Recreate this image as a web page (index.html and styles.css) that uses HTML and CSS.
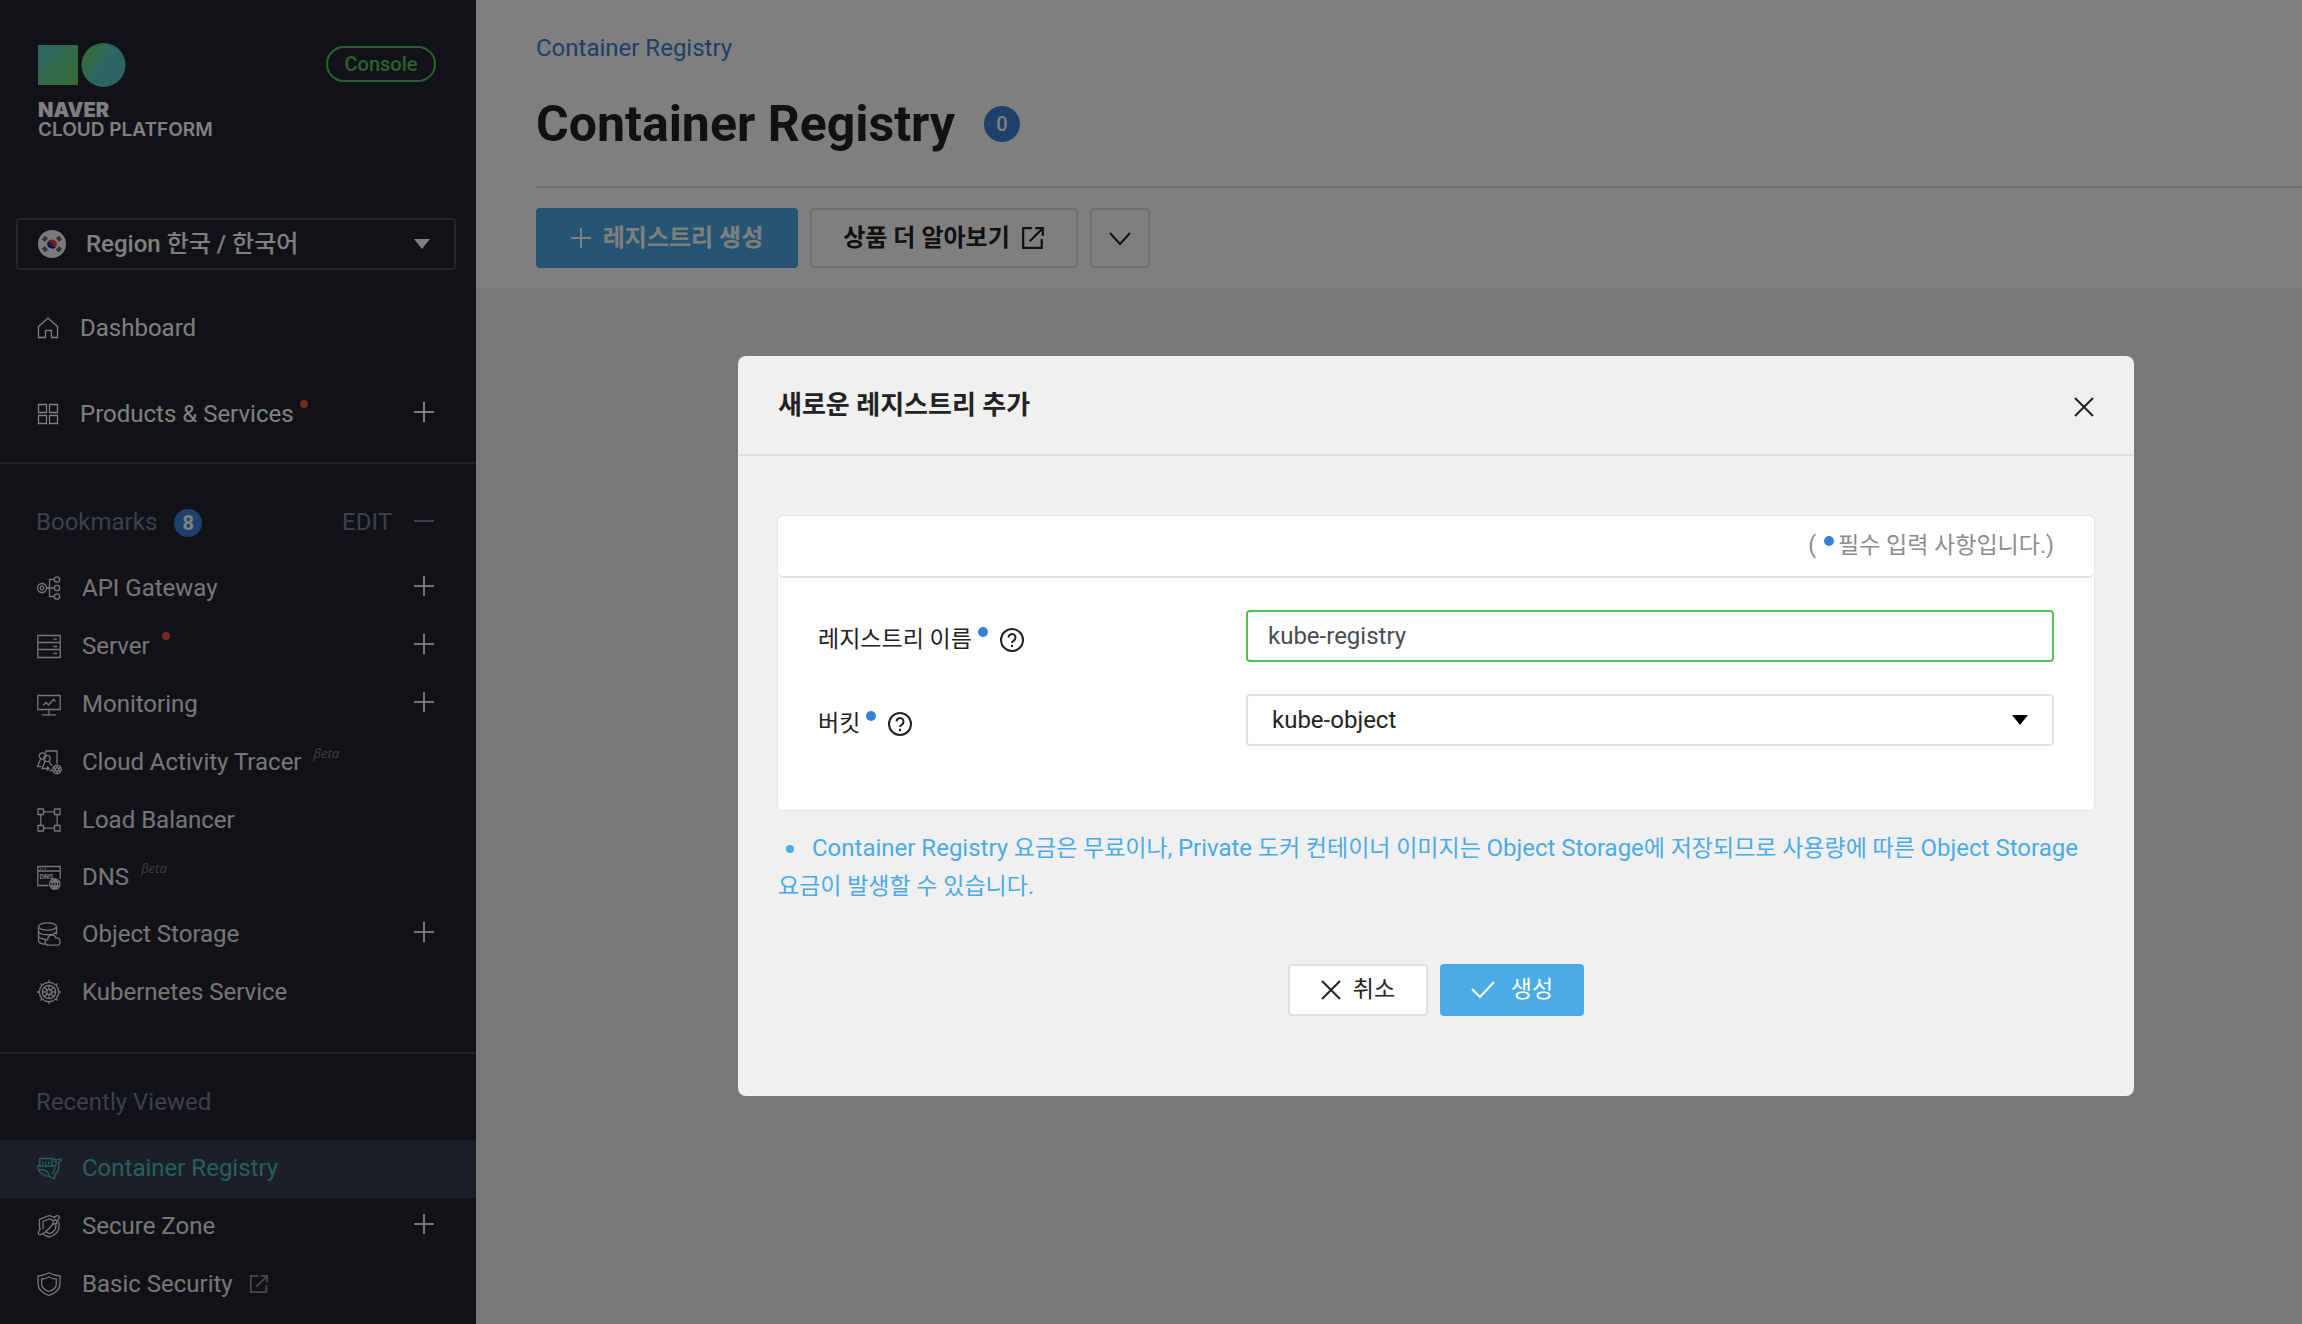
FILE: index.html
```html
<!DOCTYPE html>
<html lang="ko">
<head>
<meta charset="utf-8">
<meta name="viewport" content="width=device-width, initial-scale=1">
<title>Container Registry</title>
<link rel="stylesheet" href="styles.css">
</head>
<body>
<svg class="sprite" aria-hidden="true">
  <symbol id="plus" viewBox="0 0 20 20"><path d="M10 0v20M0 10h20"/></symbol>
  <symbol id="minus" viewBox="0 0 20 20"><path d="M0 10h20"/></symbol>
  <symbol id="cross" viewBox="0 0 20 20"><path d="M1 1l18 18M19 1L1 19"/></symbol>
  <symbol id="caret" viewBox="0 0 16 10"><path d="M0 0h16l-8 10z"/></symbol>
  <symbol id="external" viewBox="0 0 22 22"><path d="M10 2H2v18h17v-8M8 14L20 2M13 2h7v7"/></symbol>
  <symbol id="help" viewBox="0 0 24 24"><circle cx="12" cy="12" r="11"/><path d="M8.500 9.500a3.500 3.500 0 1 1 5.500 2.900c-1.300.8-2 1.300-2 2.600"/><path d="M12 16.800v2.200"/></symbol>
</svg>

<div class="layout">
  <aside class="sidebar">
    <header class="brand">
      <a class="logo" href="#">
        <svg width="88" height="44" viewBox="0 0 88 44" aria-hidden="true">
          <defs>
            <linearGradient id="g1" x1="0" y1="0" x2="1" y2="1"><stop offset="0" stop-color="#5ad0d0"/><stop offset="1" stop-color="#6ed862"/></linearGradient>
            <linearGradient id="g2" x1="0" y1="0.100" x2="1" y2="0.700"><stop offset="0" stop-color="#70dc56"/><stop offset="0.550" stop-color="#5acbcb"/></linearGradient>
          </defs>
          <path fill="url(#g1)" d="M0 2h40v40H0z"/>
          <circle fill="url(#g2)" cx="65.500" cy="22" r="22"/>
        </svg>
        <strong class="logo-naver">NAVER</strong>
        <span class="logo-cloud">CLOUD PLATFORM</span>
      </a>
      <a class="console" href="#">Console</a>
    </header>

    <div class="region">
      <svg class="flag" width="28" height="28" viewBox="0 0 28 28" aria-hidden="true">
        <circle cx="14" cy="14" r="14" fill="#f4f4f4"/>
        <path fill="#e03a30" d="M9.500 12a5 5 0 0 1 9 4.200c-1.500 1-3.600.2-4.500-1.700-1-2-3.200-3-4.500-2.500z"/>
        <path fill="#1e1e96" d="M18.500 16.200A5 5 0 0 1 9.500 12c1.300-.6 3.500.5 4.500 2.500.9 1.900 3 2.700 4.500 1.700z"/>
        <g stroke="#333" stroke-width="4" stroke-dasharray="1.300 .5"><path d="M5.500 10.500l3-3.500M19.500 7l3 3.500M5.500 17.500l3 3.500M19.500 21l3-3.500"/></g>
      </svg>
      <select class="region-select" aria-label="Region"><option>Region 한국 / 한국어</option></select>
      <svg class="caret" width="16" height="10"><use href="#caret"/></svg>
    </div>

    <nav class="main-nav">
      <div class="main-row">
        <svg class="icon" viewBox="0 0 24 24"><path d="M2.500 21.500V10.500L12 2l9.500 8.500v11h-6v-7h-6v7z"/></svg>
        <a href="#">Dashboard</a>
      </div>
      <div class="main-row">
        <svg class="icon" viewBox="0 0 24 24"><path d="M2.500 2.500h8v8h-8zM13.500 2.500h8v8h-8zM2.500 13.500h8v8h-8zM13.500 13.500h8v8h-8z"/></svg>
        <a href="#">Products &amp; Services</a><i class="new-dot"></i>
        <button class="toggle" aria-label="Expand Products &amp; Services"><svg><use href="#plus"/></svg></button>
      </div>
    </nav>

    <section class="group bookmarks">
      <div class="group-head">
        <h2>Bookmarks</h2><span class="count">8</span>
        <button class="edit">EDIT</button>
        <button class="toggle" aria-label="Collapse bookmarks"><svg><use href="#minus"/></svg></button>
      </div>
      <ul>
        <li>
          <svg class="icon" viewBox="0 0 24 24"><circle cx="5" cy="12" r="4.500"/><circle cx="5" cy="12" r="1.800"/><circle cx="20" cy="3.500" r="2.700"/><circle cx="20" cy="12" r="2.700"/><circle cx="20" cy="20.500" r="2.700"/><path d="M9.500 12h7.800M17.300 3.500h-4.800v17h4.800"/></svg>
          <a href="#">API Gateway</a>
          <button class="toggle" aria-label="Expand API Gateway"><svg><use href="#plus"/></svg></button>
        </li>
        <li>
          <svg class="icon" viewBox="0 0 24 24"><path d="M.8 1.500h22.400v22H.8zM.8 8.500h22.400M.8 15.500h22.400M16.500 5.200h3.500M16.500 12.500h3.500M16.500 19.500h3.500"/></svg>
          <a href="#">Server</a><i class="new-dot far"></i>
          <button class="toggle" aria-label="Expand Server"><svg><use href="#plus"/></svg></button>
        </li>
        <li>
          <svg class="icon" viewBox="0 0 24 24"><path d="M.8 3.500h22.400v14H.8zM12 17.500v5M5 22.800h14M6 13.500l3-3 2.500 2.500 5-5.500 2 2"/></svg>
          <a href="#">Monitoring</a>
          <button class="toggle" aria-label="Expand Monitoring"><svg><use href="#plus"/></svg></button>
        </li>
        <li>
          <svg class="icon" viewBox="0 0 24 24"><path d="M9 3V1h11v13M12.500 20.500h3"/><circle cx="5.500" cy="6" r="3.200"/><circle cx="10" cy="8.500" r="3.200"/><path d="M3.500 9L.5 16.500h3.500M8 11.500L5 18.500h4M12 11.500l3 4.500M8.500 18.500h3M10 16.500l2 2-2 2"/><circle cx="20" cy="19.500" r="4.200"/><circle cx="20" cy="19.500" r="1.700"/><path d="M20 15.300v2.500M20 21v2.500M16.400 17.400l2.100 1.200M21.500 20.400l2.100 1.200M16.400 21.600l2.100-1.200M21.500 18.600l2.100-1.200"/></svg>
          <a href="#">Cloud Activity Tracer</a><sup class="beta">βeta</sup>
        </li>
        <li>
          <svg class="icon" viewBox="0 0 24 24"><path d="M1 1h5.500v5.500H1zM17.500 1H23v5.500h-5.500zM1 17.500h5.500V23H1zM17.500 17.500H23V23h-5.500zM6.500 3.800h11M6.500 20.200h11M3.800 6.500v11M20.200 6.500v11"/></svg>
          <a href="#">Load Balancer</a>
        </li>
        <li class="short">
          <svg class="icon" viewBox="0 0 24 24"><path d="M11.500 20.500H.8v-19h22.400v12.500M.8 6h22.400M3 3.800h1M5.500 3.800h1M8 3.800h1"/><text class="icon-text" x="2.500" y="13.500">DNS</text><circle cx="17.800" cy="19" r="5.200"/><path d="M13.500 17h8.600M13.500 21h8.600M17.800 14v10M17.300 14c-3 3-3 7 0 10M18.300 14c3 3 3 7 0 10"/></svg>
          <a href="#">DNS</a><sup class="beta">βeta</sup>
        </li>
        <li>
          <svg class="icon" viewBox="0 0 24 24"><ellipse cx="10.500" cy="4.500" rx="9" ry="3.700"/><path d="M1.500 4.500v14c0 2 3 3.500 6.500 3.700M19.500 4.500v8M1.500 9c0 5 18 5 18 0M1.500 14c0 2 4 3.500 8 3.300"/><path d="M11.500 23.200c-4.500 0-4.500-5.500-.7-5.700 0-5 6.700-6 8.200-1.500 5-.5 5.500 7.200 1 7.200z"/></svg>
          <a href="#">Object Storage</a>
          <button class="toggle" aria-label="Expand Object Storage"><svg><use href="#plus"/></svg></button>
        </li>
        <li>
          <svg class="icon" viewBox="0 0 24 24"><circle cx="12" cy="12" r="9.700"/><circle cx="12" cy="12" r="6.700"/><circle cx="12" cy="12" r="2.500"/><path d="M12 0v2.300M12 21.700V24M0 12h2.300M21.700 12H24M3.500 3.500L5 5M19 19l1.500 1.500M20.500 3.500L19 5M5 19l-1.500 1.500M12 5.300v4.200M12 14.500v4.200M5.300 12h4.200M14.500 12h4.200M7.300 7.300l3 3M13.700 13.700l3 3M16.700 7.300l-3 3M10.300 13.700l-3 3"/></svg>
          <a href="#">Kubernetes Service</a>
        </li>
      </ul>
    </section>

    <section class="group recent">
      <div class="group-head"><h2>Recently Viewed</h2></div>
      <ul>
        <li class="active">
          <svg class="icon" viewBox="0 0 24 24"><path d="M2.800 10V2.500h12V10M5.800 5.500v3M8.800 5.500v3M11.800 5.500v3"/><path d="M.8 10h17c1.500-1 1.700-2.500 1.200-4-1.600-.4-2.500-1.300-2.700-3.200 1.800 0 3 .3 3.700 1.400.8-1 2.200-1.400 4.300-1.200-.3 2.200-1.400 3.100-2.800 3.300 1 5.200-.5 10-3.500 12.500l-.5 3.700c-2.200-.3-3.700-1-4.700-2.200C7 20.500 1.200 17 .8 10zM2 13.500c4 .3 7 .5 8.500 2.500l2 4M17.800 11c0 3-1 5.500-3 7"/></svg>
          <a href="#">Container Registry</a>
        </li>
        <li>
          <svg class="icon" viewBox="0 0 24 24"><path d="M18.500 4L12.500 1.500 2.500 5.500v7c0 1.200.3 2.500.8 3.500M6 20c2 1.500 4 2.500 6.500 3 5.500-1.800 9.500-5 9.500-10.500V8"/><path d="M16.500 6.500l-4-1.500L6 7.500v5c0 1 .2 1.800.5 2.500M8.500 17.500c1.200 1 2.500 1.700 4 2.200 3.800-1.400 6.300-3.600 6.300-7.200v-2"/><circle cx="18" cy="8" r="2"/><path d="M16.500 3.500c3-2 5-2.300 5.600-1.200.5 1.200-.2 3-1.800 5.200M16.500 9.500C11 16.500 4.500 21.500 2 20.500.8 19.800 1.300 17.500 3.300 14.500"/></svg>
          <a href="#">Secure Zone</a>
          <button class="toggle" aria-label="Expand Secure Zone"><svg><use href="#plus"/></svg></button>
        </li>
        <li>
          <svg class="icon" viewBox="0 0 24 24"><path d="M12 .8c3.500 2 7 3 11 3v8c0 6-4.500 9.500-11 11.500C5.500 21.300 1 17.800 1 11.800v-8c4 0 7.500-1 11-3z"/><path d="M12 5c2.300 1.300 4.700 2 7.300 2v5c0 4-2.800 6-7.300 7.500C7.500 18 4.700 16 4.700 12V7C7.300 7 9.700 6.300 12 5z"/></svg>
          <a href="#">Basic Security</a>
          <svg class="ext" width="20" height="20"><use href="#external"/></svg>
        </li>
      </ul>
    </section>
  </aside>

  <main class="content">
    <header class="page-head">
      <a class="crumb" href="#">Container Registry</a>
      <div class="title-row"><h1>Container Registry</h1><span class="count big">0</span></div>
      <div class="actions">
        <button class="btn primary"><svg width="20" height="20"><use href="#plus"/></svg>레지스트리 생성</button>
        <button class="btn outline">상품 더 알아보기<svg width="24" height="24"><use href="#external"/></svg></button>
        <button class="btn more" aria-label="More"><svg width="22" height="13" viewBox="0 0 22 13"><path d="M1 1l10 11L21 1"/></svg></button>
      </div>
    </header>
  </main>
</div>

<div class="overlay">
  <form class="modal" role="dialog" aria-labelledby="modal-title">
    <header class="modal-head">
      <h2 id="modal-title">새로운 레지스트리 추가</h2>
      <button type="button" class="close" aria-label="닫기"><svg width="20" height="20"><use href="#cross"/></svg></button>
    </header>
    <div class="modal-body">
      <div class="panel">
        <p class="required-note">( <i class="req"></i>필수 입력 사항입니다.)</p>
        <div class="fields">
          <div class="field">
            <label for="name">레지스트리 이름</label><i class="req"></i><svg class="help"><use href="#help"/></svg>
          </div>
          <input class="control" id="name" type="text" value="kube-registry">
          <div class="field">
            <label for="bucket">버킷</label><i class="req"></i><svg class="help"><use href="#help"/></svg>
          </div>
          <div class="control picker">
            <select id="bucket"><option>kube-object</option></select>
            <svg class="caret" width="16" height="10"><use href="#caret"/></svg>
          </div>
        </div>
      </div>
      <p class="notice"><i class="bullet"></i><span lang="en">Container Registry</span> 요금은 무료이나, <span lang="en">Private</span> 도커 컨테이너 이미지는 <span lang="en">Object Storage</span>에 저장되므로 사용량에 따른 <span lang="en">Object Storage</span> 요금이 발생할 수 있습니다.</p>
      <div class="modal-actions">
        <button type="button" class="small-btn cancel"><svg width="20" height="20"><use href="#cross"/></svg>취소</button>
        <button type="submit" class="small-btn create"><svg width="24" height="18" viewBox="0 0 24 18"><path d="M1 8l8 8L23 1"/></svg>생성</button>
      </div>
    </div>
  </form>
</div>
</body>
</html>
```
FILE: styles.css
```css
* { box-sizing: border-box; }

body {
  margin: 0;
  background: #f1f1f1;
  color: #222;
  font: 24px/36px Roboto, "Noto Sans CJK KR", sans-serif;
}

h1, h2, p, ul { margin: 0; padding: 0; font-weight: 400; font-size: inherit; }
li { list-style: none; }
a { color: inherit; text-decoration: none; }
button, select, input { font: inherit; color: inherit; border: 0; padding: 0; margin: 0; background: none; }
button { cursor: pointer; }
svg { flex: none; display: block; fill: none; stroke: currentColor; stroke-width: 2; overflow: visible; }
.sprite { position: absolute; width: 0; height: 0; }
.caret { fill: currentColor; stroke: none; }
.flag, .logo svg { stroke: none; }

.layout { display: flex; min-height: 100vh; }

/* Sidebar */
.sidebar { flex: none; width: 476px; background: #222430; color: #fff; }

.brand { display: flex; justify-content: space-between; align-items: flex-start; padding: 43px 40px 0 38px; height: 218px; }
.logo { display: flex; flex-direction: column; }
.logo-naver, .logo-cloud { font: 900 20px/20px Inter, sans-serif; }
.logo-naver { margin-top: 13px; }
.logo-cloud { font-weight: 600; font-size: 19px; }
.console { margin-top: 3px; width: 110px; height: 36px; border: 2px solid #55c35c; border-radius: 18px; color: #55c35c; font-weight: 500; font-size: 20px; line-height: 32px; text-align: center; }

.region { display: flex; align-items: center; margin: 0 20px 0 16px; height: 52px; padding: 0 24px 0 20px; border: 2px solid #484c56; border-radius: 4px; }
.region-select { appearance: none; flex: 1; height: 48px; padding-left: 20px; font-weight: 500; }

.icon { width: 24px; height: 24px; stroke-width: 1.3; }
.icon-text { font: 700 7px/7px Roboto, sans-serif; fill: currentColor; stroke: none; }
.main-nav { padding-top: 15px; height: 194px; border-bottom: 2px solid #43464e; }
.main-row { display: flex; align-items: center; height: 86px; padding: 0 42px 0 36px; }
.main-row .icon { margin-right: 20px; }

.toggle { margin-left: auto; width: 20px; height: 36px; padding-bottom: 4px; }
.toggle svg { width: 20px; height: 20px; }
.new-dot { width: 8px; height: 8px; border-radius: 4px; margin: 0 0 20px 6px; background: #ea5643; }
.new-dot.far { margin-left: 12px; }

.group { border-bottom: 2px solid #43464e; }
.group-head { display: flex; align-items: center; color: #748399; padding: 0 42px 0 36px; }
.bookmarks .group-head { padding-top: 40px; margin-bottom: 19px; }
.bookmarks { padding-bottom: 31px; }
.recent { padding-top: 30px; border-bottom: 0; }
.recent .group-head { margin-bottom: 20px; }
.edit { margin-left: auto; margin-right: 22px; }
.edit + .toggle { margin-left: 0; padding-bottom: 2px; }
.count { display: flex; align-items: center; justify-content: center; width: 28px; height: 28px; border-radius: 50%; margin: 2px 0 0 17px; background: #3a83d6; color: #fff; font-weight: 700; font-size: 20px; }
.group li { display: flex; align-items: center; height: 58px; padding: 0 42px 0 37px; color: #ededed; }
.group li.short { height: 56px; }
.group li .icon { margin-right: 21px; }
.recent li { padding-bottom: 2px; }
.group li.active { background: #343e50; color: #51bfbb; }
.beta { margin: 0 0 18px 12px; color: #767a85; font: italic 13px/16px "Noto Sans", sans-serif; }
.ext { margin-left: 16px; color: #8a929e; }

/* Page */
.content { flex: 1; min-width: 0; }
.page-head { height: 288px; padding: 30px 0 0 60px; background: #fff; }
.crumb { display: block; color: #3a7fd0; }
.title-row { display: flex; align-items: center; height: 122px; padding-bottom: 4px; border-bottom: 2px solid #dcdcdc; }
h1 { font-weight: 700; font-size: 50px; line-height: 60px; color: #222; }
.count.big { width: 36px; height: 36px; margin: 0 0 0 29px; font-weight: 500; }
.actions { display: flex; gap: 12px; padding-top: 20px; }
.btn { display: flex; align-items: center; justify-content: center; height: 60px; border-radius: 4px; font-weight: 700; }
.primary { width: 262px; gap: 12px; background: #4aabe6; color: #fff; }
.outline { width: 268px; gap: 11px; border: 2px solid #e1e1e1; }
.more { width: 60px; border: 2px solid #e1e1e1; }

/* Dialog */
.overlay { position: fixed; inset: 0; display: flex; align-items: flex-start; padding: 356px 168px 0 738px; background: rgba(0, 0, 0, 0.5); }
.modal { flex: 1; padding-bottom: 80px; border-radius: 8px; background: #f0f0f0; }
.modal-head { display: flex; justify-content: space-between; align-items: center; height: 100px; padding: 0 40px; border-bottom: 2px solid #e1e1e1; }
.modal-head h2 { font-weight: 700; font-size: 26px; }
.close { width: 20px; height: 20px; margin-top: 4px; }
.modal-body { padding: 59px 40px 0; }

.panel { margin: 0 -1px; border: 1px solid #e4e4e4; border-radius: 6px; background: #fff; }
.required-note { display: flex; justify-content: flex-end; align-items: center; height: 62px; padding-right: 40px; border-bottom: 2px solid #e1e1e1; border-radius: 6px; color: #8c8c8c; font-size: 23px; }
.req { width: 10px; height: 10px; margin: 0 4px 10px 8px; border-radius: 50%; background: #3680d6; }
.fields { display: grid; grid-template-columns: 428px 1fr; gap: 32px 0; padding: 32px 40px 64px; }
.field { display: flex; align-items: center; padding-top: 7px; font-size: 23px; }
.field .req { margin: 0 12px 16px 6px; }
.help { width: 24px; height: 24px; }
.control { width: 100%; height: 52px; border: 2px solid #e1e1e1; border-radius: 4px; background: #fff; }
input.control { padding: 0 20px; border-color: #55c04f; color: #464c52; outline: 0; }
.picker { display: flex; align-items: center; padding-right: 24px; }
.picker select { appearance: none; flex: 1; height: 48px; padding-left: 24px; }
.picker .caret { color: #000; }

.notice { margin-top: 18px; font-size: 23px; line-height: 38px; color: #4aabe6; }
.notice :lang(en) { font-size: 24px; }
.bullet { display: inline-block; width: 8px; height: 8px; margin: 0 18px 3px 8px; border-radius: 50%; background: currentColor; }
.modal-actions { display: flex; justify-content: center; gap: 12px; margin-top: 58px; }
.small-btn { display: flex; align-items: center; justify-content: center; height: 52px; border-radius: 4px; font-size: 23px; }
.cancel { width: 140px; gap: 12px; border: 2px solid #e1e1e1; background: #fff; }
.create { width: 144px; gap: 16px; background: #4aabe6; color: #fff; }
```
